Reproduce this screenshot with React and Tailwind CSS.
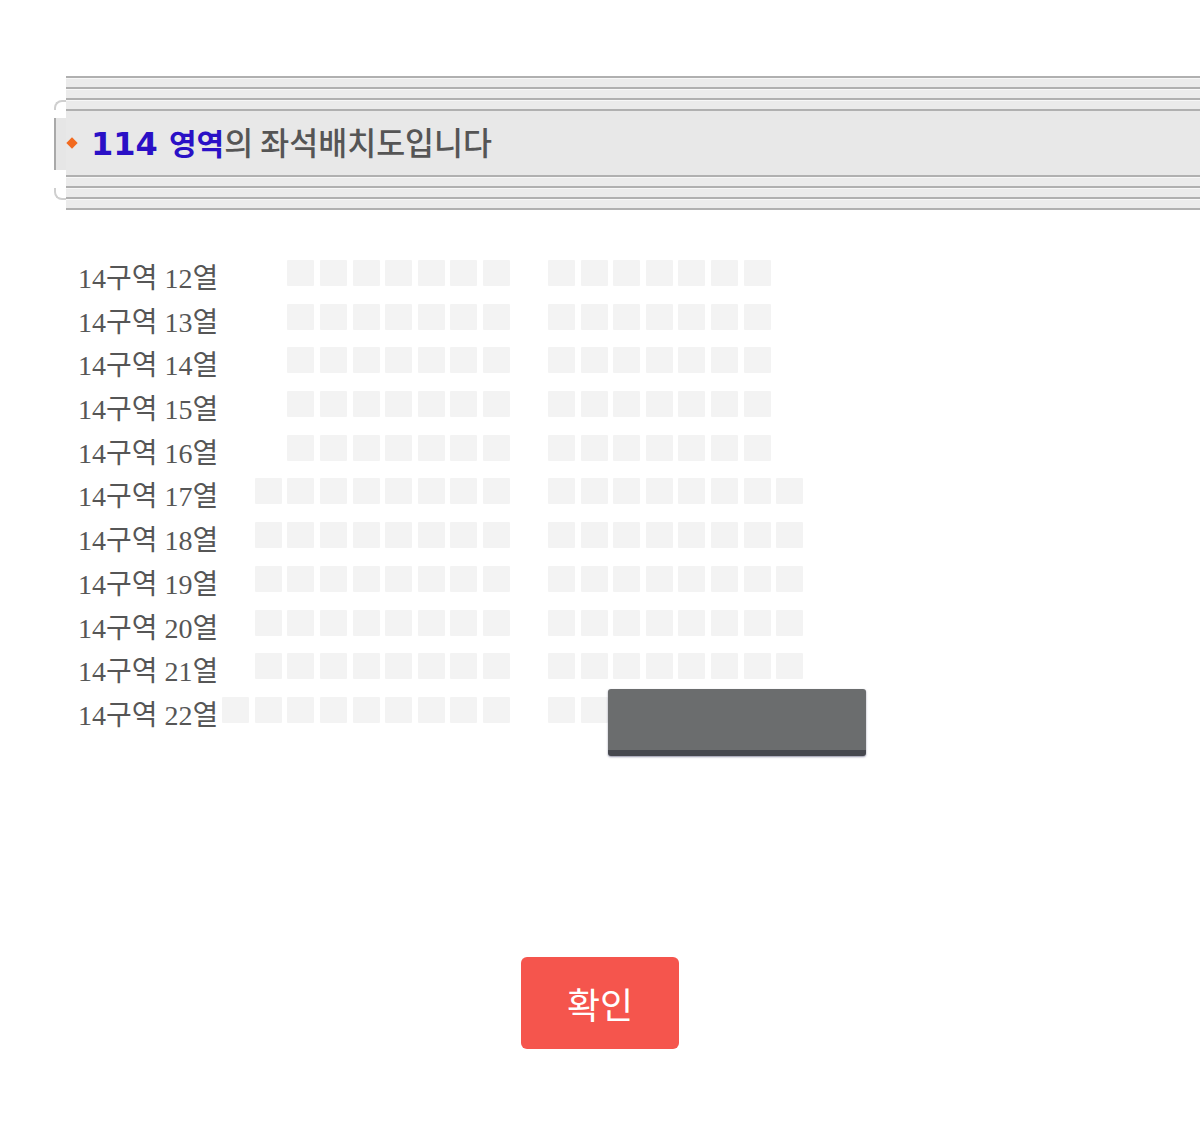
import React from "react";

const rows = [
  { n: 12, left: 7, right: 7 },
  { n: 13, left: 7, right: 7 },
  { n: 14, left: 7, right: 7 },
  { n: 15, left: 7, right: 7 },
  { n: 16, left: 7, right: 7 },
  { n: 17, left: 8, right: 8 },
  { n: 18, left: 8, right: 8 },
  { n: 19, left: 8, right: 8 },
  { n: 20, left: 8, right: 8 },
  { n: 21, left: 8, right: 8 },
  { n: 22, left: 9, right: 8 },
];

const Stripes = () => (
  <div className="flex flex-col">
    <div className="h-[2px] bg-[#b0b0b0]" />
    <div className="h-[9px] bg-[#ebebeb] border-t border-[#f7f7f7]" />
    <div className="h-[2px] bg-[#b0b0b0]" />
    <div className="h-[9px] bg-[#ebebeb] border-t border-[#f7f7f7]" />
    <div className="h-[2px] bg-[#b0b0b0]" />
    <div className="h-[9px] bg-[#ebebeb] border-t border-[#f7f7f7]" />
    <div className="h-[2px] bg-[#b0b0b0]" />
  </div>
);

const Seat = () => <div className="w-[27px] h-[26px] shrink-0 rounded-[1px] bg-[#f3f3f3]" />;

const SeatRow = ({ n, left, right }) => (
  <div className="flex items-start h-[26px]">
    <div className="ml-[78px] w-[143px] shrink-0 mt-[5px] whitespace-nowrap text-[28px] leading-[28px] text-[#565656] font-['Liberation_Serif','Noto_Sans_CJK_KR',serif]">
      14구역 {n}열
    </div>
    <div className="w-[289px] shrink-0 flex justify-end gap-[5.6px]">
      {Array.from({ length: left }).map((_, i) => (
        <Seat key={i} />
      ))}
    </div>
    <div className="w-[38px] shrink-0" />
    <div className="flex gap-[5.6px]">
      {Array.from({ length: right }).map((_, i) => (
        <Seat key={i} />
      ))}
    </div>
  </div>
);

const App = () => {
  return (
    <div className="relative w-[1200px] h-[1137px] bg-white overflow-hidden">
      {/* Header */}
      <div className="pt-[76px] pl-[54px] flex">
        {/* left bracket */}
        <div className="w-[12px] shrink-0 flex flex-col">
          <div className="h-[24px]" />
          <div className="h-[10px] border-l-2 border-t-2 border-[#cfcfcf] rounded-tl-[8px]" />
          <div className="h-[8px]" />
          <div className="h-[52px] bg-[#e6e6e6] border-l-2 border-[#a9a9a9]" />
          <div className="h-[18px]" />
          <div className="h-[12px] border-l-2 border-b-2 border-[#cfcfcf] rounded-bl-[8px]" />
        </div>
        <div className="flex-1 flex flex-col">
          <Stripes />
          <div className="h-[64px] bg-[#e8e8e8] flex items-center">
            <div className="ml-[2px] w-[8px] h-[8px] rotate-45 bg-[#f26a1f]" />
            <div className="ml-[15px] leading-none whitespace-nowrap font-['DejaVu_Sans','Noto_Sans_CJK_KR',sans-serif]">
              <span className="text-[32px] font-bold text-[#2a10c6]">114 </span>
              <span className="text-[30px] font-bold text-[#2a10c6] font-['Noto_Sans_CJK_KR',sans-serif]">영역</span>
              <span className="text-[31.5px] text-[#555555] font-['Noto_Sans_CJK_KR',sans-serif] font-medium">의 좌석배치도입니다</span>
            </div>
          </div>
          <Stripes />
        </div>
      </div>

      {/* Seat map */}
      <div className="relative mt-[50px] flex flex-col gap-[17.7px]">
        {rows.map((r) => (
          <SeatRow key={r.n} {...r} />
        ))}
        <div className="absolute left-[608px] top-[429px] w-[258px] h-[67px] rounded-[3px] bg-[#6b6d6e] border-b-[6px] border-[#46484e] shadow-[0_1px_2px_rgba(40,40,80,0.5)]" />
      </div>

      {/* Confirm */}
      <div className="mt-[234px] flex justify-center">
        <button className="w-[158px] h-[92px] rounded-[6px] bg-[#f5554d] text-white text-[36px] font-['Noto_Sans_CJK_KR',sans-serif] flex items-center justify-center">
          확인
        </button>
      </div>
    </div>
  );
};

export default App;
